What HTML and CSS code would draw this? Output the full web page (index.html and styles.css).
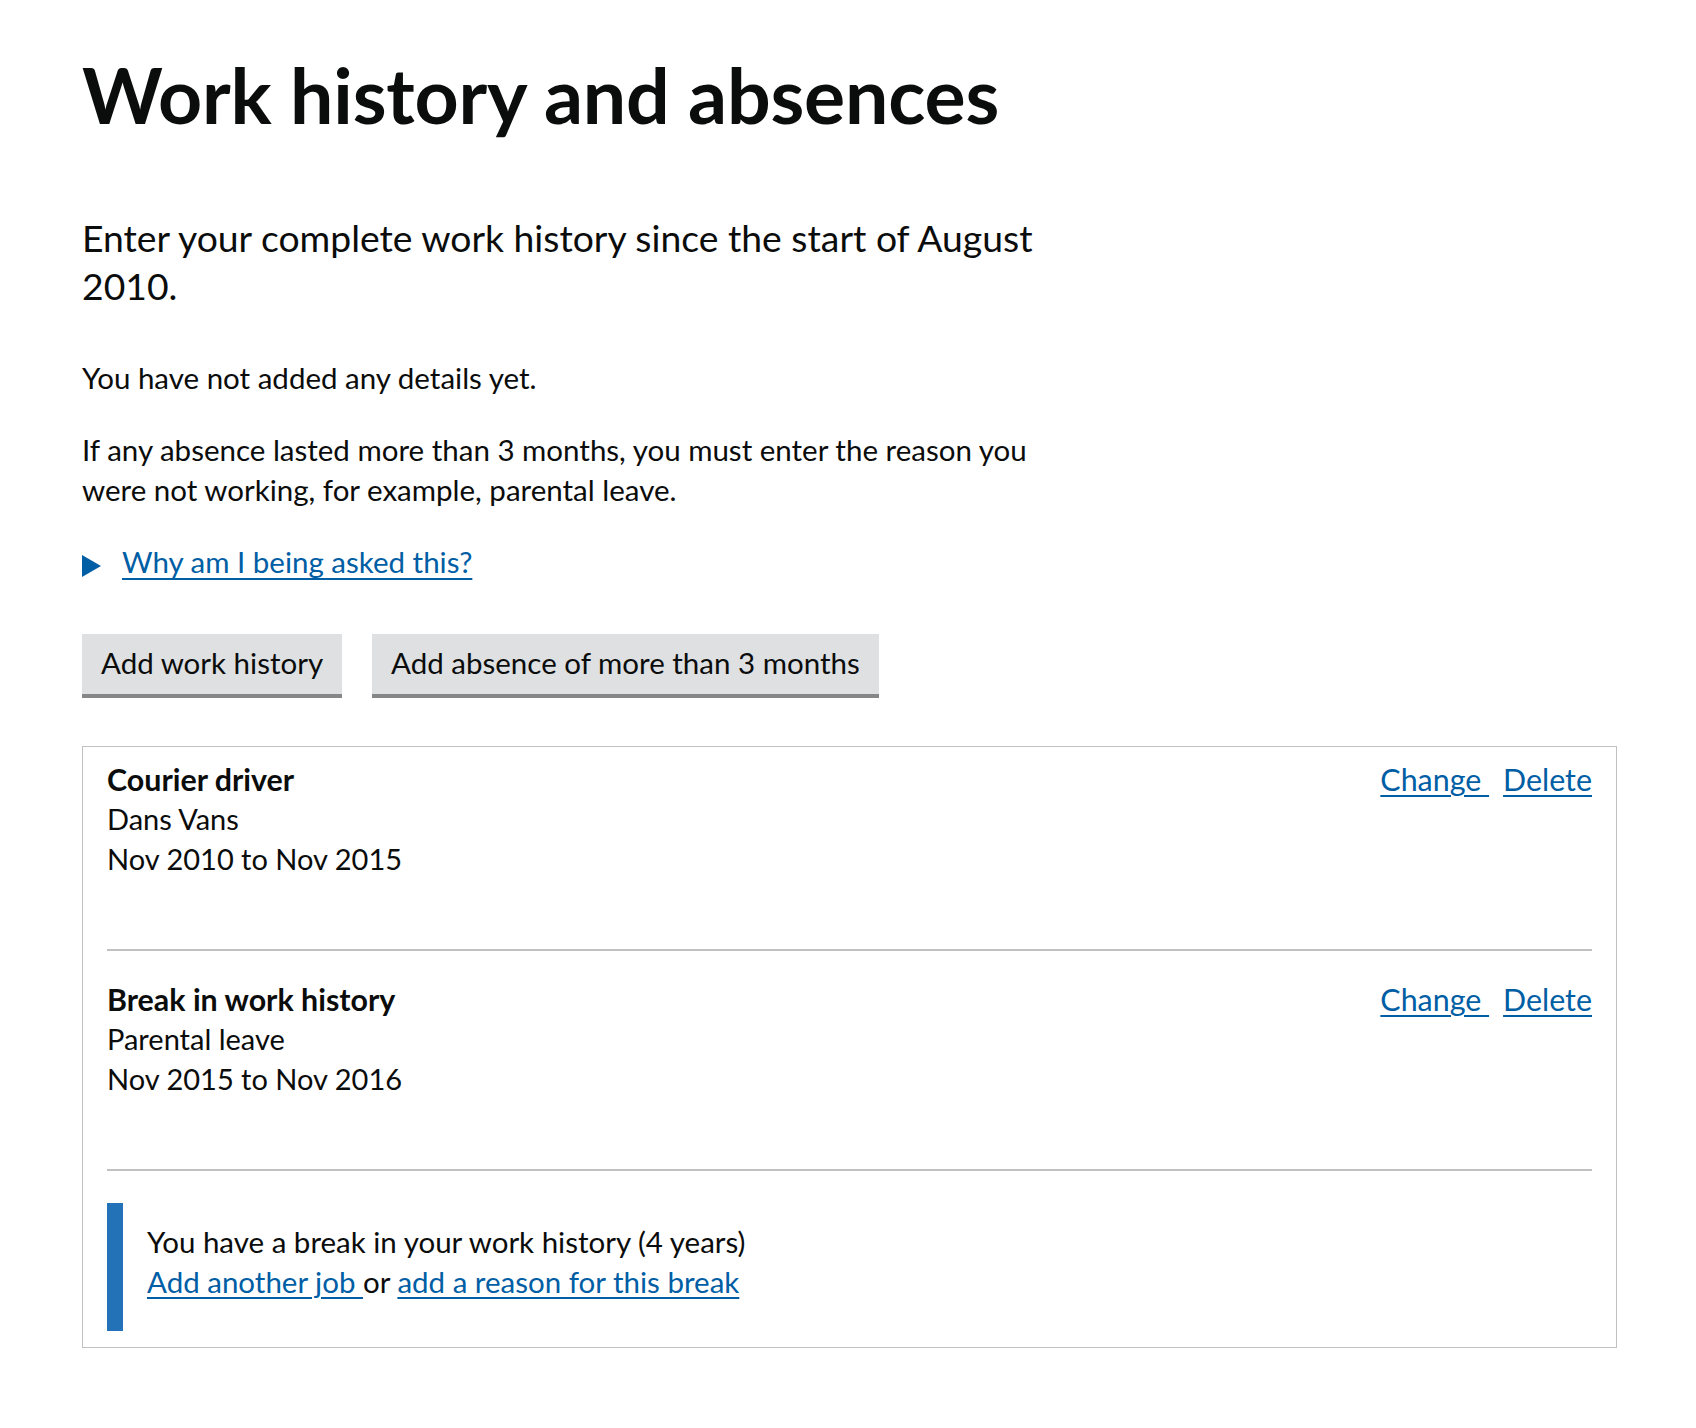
FILE: index.html
```html
<!DOCTYPE html>
<html lang="en">
<head>
<meta charset="utf-8">
<title>Work history and absences</title>
<link rel="stylesheet" href="styles.css">
</head>
<body>
<main class="page">
  <h1 class="title">Work history and absences</h1>
  <div class="column">
    <p class="lead">Enter your complete work history since the start of August 2010.</p>
    <p class="body">You have not added any details yet.</p>
    <p class="body">If any absence lasted more than 3 months, you must enter the reason you were not working, for example, parental leave.</p>
    <details class="details">
      <summary class="summary">
        <svg class="arrow" width="19" height="22" viewBox="0 0 19 22" aria-hidden="true"><polygon points="0,0 19,11 0,22" fill="#005ea5"/></svg>
        <span class="summary-text">Why am I being asked this?</span>
      </summary>
    </details>
  </div>
  <div class="buttons">
    <button class="btn" type="button">Add work history</button>
    <button class="btn" type="button">Add absence of more than 3 months</button>
  </div>
  <section class="panel">
    <div class="item">
      <div class="item-text">
        <div class="item-title">Courier driver</div>
        <div>Dans Vans</div>
        <div>Nov 2010 to Nov 2015</div>
      </div>
      <div class="actions"><a class="link" href="#">Change&nbsp;</a><a class="link delete" href="#">Delete</a></div>
    </div>
    <div class="item">
      <div class="item-text">
        <div class="item-title">Break in work history</div>
        <div>Parental leave</div>
        <div>Nov 2015 to Nov 2016</div>
      </div>
      <div class="actions"><a class="link" href="#">Change&nbsp;</a><a class="link delete" href="#">Delete</a></div>
    </div>
    <div class="inset">
      <div>You have a break in your work history (4 years)</div>
      <div><a class="link" href="#">Add another job&nbsp;</a>or <a class="link" href="#">add a reason for this break</a></div>
    </div>
  </section>
</main>
</body>
</html>
```
FILE: styles.css
```css
body {
  margin: 0;
  font-family: Lato, "Liberation Sans", Arial, sans-serif;
  color: #0b0c0c;
  background: #ffffff;
}

.page {
  width: 1535px;
  margin-left: 82px;
  padding-top: 52px;
  padding-bottom: 80px;
}

.title {
  font-size: 77px;
  line-height: 84px;
  font-weight: 700;
  letter-spacing: -0.2px;
  margin: 0 0 78px;
}

.column {
  width: 976px;
}

.lead {
  font-size: 37.3px;
  line-height: 48px;
  margin: 0 0 48px;
}

.body {
  font-size: 29.5px;
  line-height: 40px;
  margin: 0 0 32px;
}

.details {
  margin: 0 0 52px;
}

.summary {
  display: flex;
  align-items: center;
  gap: 21px;
  list-style: none;
  cursor: pointer;
  font-size: 29.5px;
  line-height: 40px;
  color: #005ea5;
}

.summary::-webkit-details-marker {
  display: none;
}

.arrow {
  flex: none;
  margin-top: 8px;
}

.summary-text {
  text-decoration: underline;
  text-decoration-thickness: 2px;
  text-underline-offset: 5px;
}

.buttons {
  display: flex;
  gap: 30px;
  margin-bottom: 52px;
}

.btn {
  font-family: inherit;
  font-size: 29.5px;
  line-height: 40px;
  padding: 9px 19px 11px;
  border: 0;
  border-radius: 0;
  background: #dee0e2;
  box-shadow: 0 4px 0 #858686;
  color: #0b0c0c;
}

.panel {
  border: 1px solid #bfc1c3;
  padding: 12px 24px 16px;
}

.item {
  display: flex;
  justify-content: space-between;
  align-items: flex-start;
  padding-bottom: 70px;
  border-bottom: 2px solid #bfc1c3;
  font-size: 29px;
  line-height: 40px;
}

.item + .item {
  padding-top: 28px;
}

.item-title {
  font-weight: 700;
  font-size: 30.4px;
}

.actions {
  white-space: nowrap;
  font-size: 30.4px;
}

.link {
  color: #005ea5;
  text-decoration: underline;
  text-decoration-thickness: 2px;
  text-underline-offset: 4px;
}

.delete {
  margin-left: 14px;
}

.inset {
  margin-top: 32px;
  border-left: 16px solid #2371b6;
  padding: 19px 24px 29px;
  font-size: 29.5px;
  line-height: 40px;
}
```
